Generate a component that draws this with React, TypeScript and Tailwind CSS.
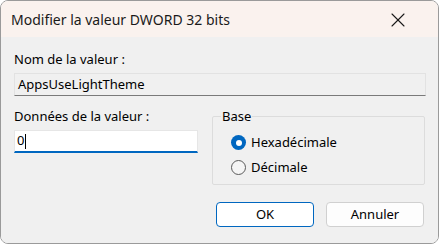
import { X } from "lucide-react";

const font = { fontFamily: '"Noto Sans", "Open Sans", sans-serif' };

function Radio({ checked, label }: { checked?: boolean; label: string }) {
  return (
    <div className="flex items-center gap-[5px]">
      {checked ? (
        <span className="flex h-[15px] w-[15px] items-center justify-center rounded-full bg-[#0067c0]">
          <span className="h-[6px] w-[6px] rounded-full bg-white" />
        </span>
      ) : (
        <span className="h-[15px] w-[15px] rounded-full border border-[#5a5a5a] bg-[#f5f5f5]" />
      )}
      <span className="text-[13px] leading-none text-black">{label}</span>
    </div>
  );
}

export default function App() {
  return (
    <div className="h-[245px] w-[440px] bg-white" style={font}>
      <div className="flex h-[244px] w-[439px] flex-col overflow-hidden rounded-lg border border-[#9a9a9a]">
        {/* Title bar */}
        <div className="flex h-[36px] shrink-0 items-center justify-between bg-[#faf2ee] pl-[10px] pr-[28px]">
          <span className="text-[14px] text-[#1a1a1a]">Modifier la valeur DWORD 32 bits</span>
          <X className="mt-[2px] h-[24px] w-[24px] text-[#1a1a1a]" strokeWidth={1.1} />
        </div>

        {/* Body */}
        <div className="flex flex-1 flex-col bg-[#f0f0f0] px-[13px] pt-[14px]">
          <div className="text-[13px] leading-[16px] text-black">Nom de la valeur :</div>
          <div className="mt-[6px] flex h-[23px] w-[412px] items-center border border-[#e2e2e2] border-b-[#7a7a7a] bg-[#f0f0f0] pl-[3px] text-[13px] text-black">
            AppsUseLightTheme
          </div>

          <div className="mt-[12px] flex">
            <div className="w-[184px]">
              <div className="text-[13px] leading-[16px] text-black">Données de la valeur :</div>
              <div className="mt-[6px] flex h-[23px] w-[184px] items-center border border-[#e6e6e6] border-b-2 border-b-[#0067c0] bg-white pl-[2px] text-[13px] text-black">
                0<span className="ml-[1px] h-[15px] w-[1px] bg-black" />
              </div>
            </div>

            <fieldset className="ml-[14px] mt-[1px] h-[76px] w-[215px] rounded-[2px] border border-[#dcdcdc] px-[18px] pb-0">
              <legend className="ml-[-10px] px-[1px] text-[13px] leading-[14px] text-black">Base</legend>
              <div className="mt-[12px] flex flex-col gap-[10px]">
                <Radio checked label="Hexadécimale" />
                <Radio label="Décimale" />
              </div>
            </fieldset>
          </div>

          <div className="mt-[17px] flex justify-end gap-[12px] pr-[1px]">
            <button className="h-[25px] w-[98px] rounded-[4px] border border-[#0067c0] bg-white text-[13px] text-black">
              OK
            </button>
            <button className="h-[25px] w-[98px] rounded-[4px] border border-[#d0d0d0] bg-[#fdfdfd] text-[13px] text-black">
              Annuler
            </button>
          </div>
        </div>
      </div>
    </div>
  );
}
